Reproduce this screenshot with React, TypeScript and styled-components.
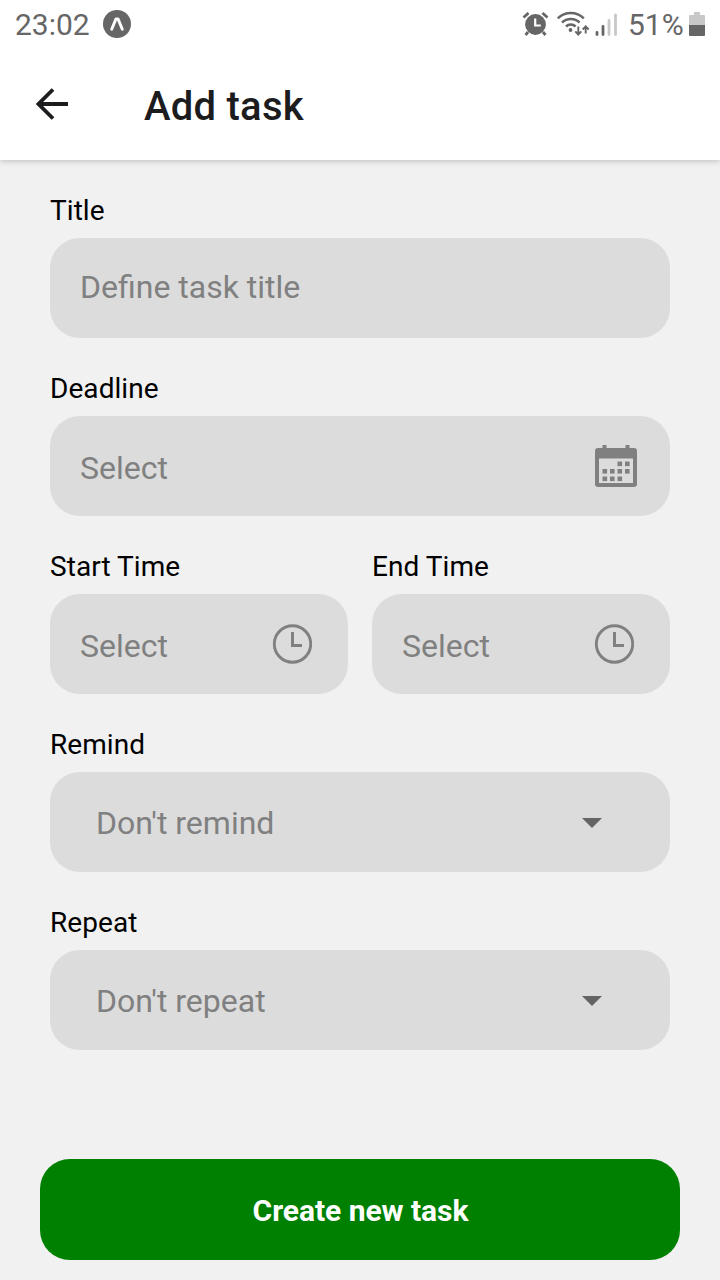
import React from 'react';
import styled, { createGlobalStyle } from 'styled-components';

const GlobalStyle = createGlobalStyle`
  * { box-sizing: border-box; }
  body {
    margin: 0;
    background: #f1f1f1;
    font-family: Roboto, 'Liberation Sans', sans-serif;
  }
`;

const Screen = styled.div`
  display: flex;
  flex-direction: column;
  width: 720px;
  height: 1280px;
  overflow: hidden;
  background: #f1f1f1;
`;

const Top = styled.header`
  flex: none;
  height: 160px;
  background: #fff;
  box-shadow: 0 1px 6px rgba(0, 0, 0, 0.22);
`;

const StatusBar = styled.div`
  display: flex;
  align-items: center;
  justify-content: space-between;
  height: 48px;
  padding: 0 14px 0 15px;
  color: #666;
  font-size: 30px;
  line-height: 48px;
`;

const StatusGroup = styled.div`
  display: flex;
  align-items: center;
  height: 48px;
`;

const StatusText = styled.span<{ $width: number }>`
  width: ${(p) => p.$width}px;
  padding-top: 2px;
  white-space: nowrap;
`;

const Icon = styled.svg`
  display: block;
  flex: none;
`;

const AppBar = styled.div`
  display: flex;
  align-items: center;
  height: 112px;
  padding-left: 36px;
`;

const BackButton = styled.button`
  display: flex;
  width: 108px;
  padding: 0;
  border: 0;
  background: none;
`;

const Heading = styled.h1`
  margin: 5px 0 0;
  color: #1c1c1e;
  font-size: 40px;
  font-weight: 500;
  line-height: 48px;
  letter-spacing: 0.25px;
`;

const Form = styled.main`
  display: flex;
  flex: 1;
  flex-direction: column;
  gap: 32px;
  padding: 32px 50px 0;
`;

const Row = styled.div`
  display: grid;
  grid-template-columns: 1fr 1fr;
  gap: 24px;
`;

const FieldBox = styled.div`
  display: flex;
  flex-direction: column;
`;

const Label = styled.label`
  height: 46px;
  color: #000;
  font-size: 28px;
  line-height: 37px;
  letter-spacing: 0.06px;
`;

const Control = styled.div<{ $left: number; $right: number }>`
  display: flex;
  align-items: center;
  justify-content: space-between;
  height: 100px;
  padding: 0 ${(p) => p.$right}px 0 ${(p) => p.$left}px;
  border-radius: 30px;
  background: #dcdcdc;
  color: #808080;
`;

const Value = styled.span<{ $raised: boolean }>`
  padding: ${(p) => (p.$raised ? '1px 0 0' : '3px 0 0')};
  font-size: 32px;
  line-height: 40px;
`;

const Footer = styled.footer`
  padding: 0 40px 20px;
`;

const CreateButton = styled.button`
  display: block;
  width: 100%;
  height: 101px;
  padding: 1px 0 0 1px;
  border: 0;
  border-radius: 30px;
  background: #008000;
  color: #fff;
  font-family: inherit;
  font-size: 30px;
  font-weight: 700;
  letter-spacing: -0.05px;
`;

const AppBadge = () => (
  <Icon width="28" height="28" viewBox="0 0 28 28">
    <circle cx="14" cy="14" r="14" fill="#666" />
    <path d="M8.7 19.2 13 8.900h2l4.300 10.300" fill="none" stroke="#fff" strokeWidth="2.900" strokeLinecap="round" strokeLinejoin="round" />
  </Icon>
);

const SystemGlyphs = styled(Icon)`
  margin-right: 10px;
`;

const SystemIcons = () => (
  <SystemGlyphs width="96" height="28" viewBox="522 10 96 28">
    <g fill="none" stroke="#666" strokeWidth="2.8">
      <path d="m523.5 17.5 5-4.5M542.500 13l5 4.500" />
      <path d="m528 32-2.500 3M543 32l2.500 3" />
    </g>
    <circle cx="535.500" cy="24.500" r="10.400" fill="#666" />
    <path d="M535.200 18.500v7h5.600" fill="none" stroke="#fff" strokeWidth="2.200" />
    <g fill="none" stroke="#666" strokeWidth="2.500">
      <path d="M557.800 18.300a18.500 18.500 0 0 1 26 0" />
      <path d="M562 22.700a12.500 12.500 0 0 1 17.600 0" />
      <path d="M566 26.500a7 7 0 0 1 9.600 0" />
    </g>
    <circle cx="570.500" cy="30" r="1.900" fill="#666" />
    <g fill="none" stroke="#666" strokeWidth="1.900">
      <path d="M578.300 26.500v8M575.300 31.300l3 3.200 3-3.200" />
      <path d="M585.700 33.500v-7M582.700 29.500l3-3.200 3 3.200" />
    </g>
    <g strokeWidth="2.800" strokeLinecap="round">
      <path d="M597 32.500v2M603 26.500v8" stroke="#666" />
      <path d="M609 20.500v14M615.500 15v19.500" stroke="#c8c8c8" />
    </g>
  </SystemGlyphs>
);

const BatteryIcon = () => (
  <Icon width="17" height="25" viewBox="0 0 17 25">
    <path d="M5 0h6v3h4q1 0 1 1v9H0V4q0-1 1-1h4z" fill="#c8c8c8" />
    <path d="M0 13h16v10q0 1-1 1H1q-1 0-1-1z" fill="#666" />
  </Icon>
);

const BackIcon = () => (
  <Icon width="34" height="34" viewBox="0 0 34 34">
    <path d="M32 17H2.500M17 2.500 2.500 17 17 31.500" fill="none" stroke="#1c1c1e" strokeWidth="3.800" />
  </Icon>
);

const DAYS: [number, number][] = [
  [22.500, 16.500], [30, 16.500],
  [7.500, 24], [15, 24], [22.500, 24], [30, 24],
  [7.500, 31.500], [15, 31.500], [22.500, 31.500],
];

const CalendarIcon = () => (
  <Icon width="42" height="42" viewBox="0 0 42 42">
    <path
      d="M7.500 0h4v3h19V0h4v3H39a3 3 0 0 1 3 3v33a3 3 0 0 1-3 3H3a3 3 0 0 1-3-3V6a3 3 0 0 1 3-3h4.500zM4 13.500v24.500h34V13.500z"
      fill="#808080"
      fillRule="evenodd"
    />
    {DAYS.map(([x, y]) => (
      <rect key={`${x}-${y}`} x={x} y={y} width="4.600" height="4.600" fill="#808080" />
    ))}
  </Icon>
);

const ClockIcon = () => (
  <Icon width="40" height="40" viewBox="0 0 40 40">
    <circle cx="20.500" cy="20" r="18.200" fill="none" stroke="#808080" strokeWidth="2.900" />
    <path d="M20.500 8v13.500h9.500" fill="none" stroke="#808080" strokeWidth="3" />
  </Icon>
);

const CaretIcon = () => (
  <Icon width="20" height="12" viewBox="0 0 20 12">
    <path d="M0 2h20L10 12z" fill="#646464" />
  </Icon>
);

interface FieldProps {
  label: string;
  value: string;
  icon?: React.ReactNode;
  left?: number;
  right?: number;
  raised?: boolean;
}

const Field = ({ label, value, icon, left = 30, right = 30, raised = false }: FieldProps) => (
  <FieldBox>
    <Label>{label}</Label>
    <Control $left={left} $right={right}>
      <Value $raised={raised}>{value}</Value>
      {icon}
    </Control>
  </FieldBox>
);

const TitleInput = styled.input`
  height: 100px;
  padding: 0 30px 3px;
  border: 0;
  border-radius: 30px;
  outline: 0;
  background: #dcdcdc;
  font-family: inherit;
  font-size: 32px;

  &::placeholder {
    color: #808080;
    opacity: 1;
  }
`;

export default function App() {
  return (
    <>
      <GlobalStyle />
      <Screen>
        <Top>
          <StatusBar>
            <StatusGroup>
              <StatusText $width={88}>23:02</StatusText>
              <AppBadge />
            </StatusGroup>
            <StatusGroup>
              <SystemIcons />
              <StatusText $width={61}>51%</StatusText>
              <BatteryIcon />
            </StatusGroup>
          </StatusBar>
          <AppBar>
            <BackButton aria-label="Back"><BackIcon /></BackButton>
            <Heading>Add task</Heading>
          </AppBar>
        </Top>
        <Form>
          <FieldBox>
            <Label htmlFor="title">Title</Label>
            <TitleInput id="title" placeholder="Define task title" />
          </FieldBox>
          <Field label="Deadline" value="Select" icon={<CalendarIcon />} right={33} />
          <Row>
            <Field label="Start Time" value="Select" icon={<ClockIcon />} right={36} />
            <Field label="End Time" value="Select" icon={<ClockIcon />} right={36} />
          </Row>
          <Field label="Remind" value="Don't remind" icon={<CaretIcon />} left={46} right={68} raised />
          <Field label="Repeat" value="Don't repeat" icon={<CaretIcon />} left={46} right={68} raised />
        </Form>
        <Footer>
          <CreateButton type="button">Create new task</CreateButton>
        </Footer>
      </Screen>
    </>
  );
}
